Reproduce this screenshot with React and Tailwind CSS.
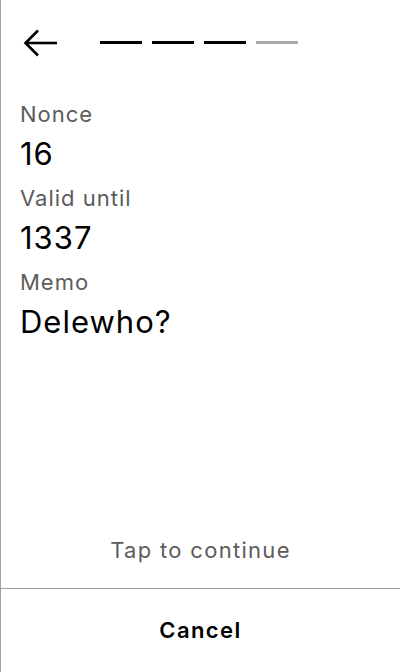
import React from "react";

/* ───── Progress dashes ───── */
const steps = [true, true, true, false];

export default function App() {
  return (
    <div
      className="h-[672px] w-[400px] flex flex-col bg-white border-l border-[#a0a0a0] text-black"
      style={{ fontFamily: "Inter, 'Liberation Sans', sans-serif" }}
    >
      {/* ── Header: back arrow + progress ── */}
      <div className="h-[86px] flex items-center pl-[19px] shrink-0">
        <svg width="40" height="30" viewBox="0 0 40 30" fill="none" stroke="black" strokeWidth="2.6">
          <path d="M5 15H37" />
          <path d="M18 2.5L5.5 15L18 27.5" />
        </svg>
        <div className="flex gap-[10px] ml-[40px] -mt-[2px]">
          {steps.map((done, i) => (
            <span
              key={i}
              className={`block w-[42px] h-[3px] ${done ? "bg-black" : "bg-[#a8a8a8]"}`}
            />
          ))}
        </div>
      </div>

      {/* ── Fields ── */}
      <div className="flex-1 pl-[19px] pt-[11px]">
        <div className="text-[22px] leading-[35px] tracking-[1px] text-[#5c5c5c]">Nonce</div>
        <div className="text-[31px] leading-[43px] tracking-[1px] mb-[6px]">16</div>
        <div className="text-[22px] leading-[35px] tracking-[1px] text-[#5c5c5c]">Valid until</div>
        <div className="text-[31px] leading-[43px] tracking-[1px] mb-[6px]">1337</div>
        <div className="text-[22px] leading-[35px] tracking-[1px] text-[#5c5c5c]">Memo</div>
        <div className="text-[31px] leading-[43px] tracking-[1px]">Delewho?</div>
      </div>

      {/* ── Tap hint ── */}
      <div className="h-[64px] pb-[11px] flex items-center justify-center text-[22px] tracking-[1.3px] text-[#5c5c5c] shrink-0">
        Tap to continue
      </div>

      {/* ── Cancel ── */}
      <div className="h-[84px] border-t border-[#a0a0a0] flex items-center justify-center text-[22px] tracking-[1.4px] font-semibold shrink-0">
        Cancel
      </div>
    </div>
  );
}
